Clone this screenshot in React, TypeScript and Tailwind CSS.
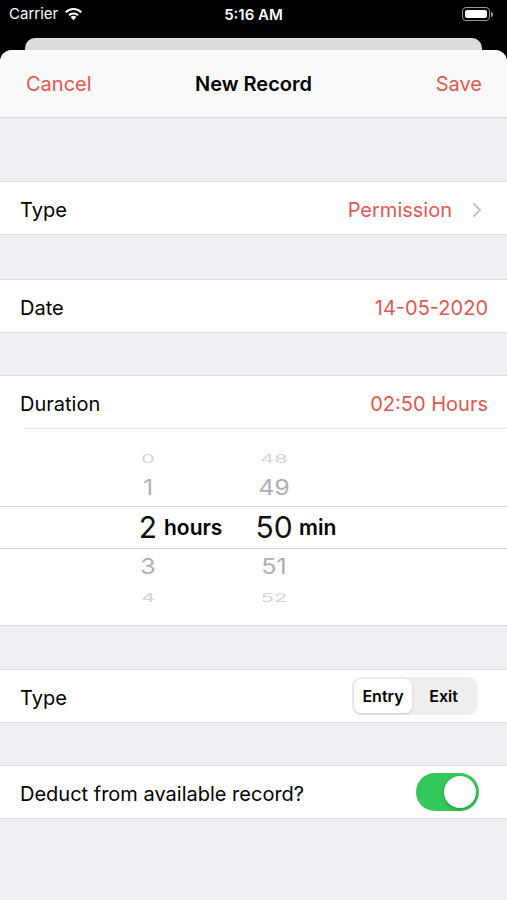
import React from "react";

const RED = "text-[#e2574f]";

function Row({ children, className = "" }: { children: React.ReactNode; className?: string }) {
  return (
    <div className={`h-[54px] bg-white border-y border-[#dcdce0] flex items-center pl-[20px] pr-[19px] pt-[3px] ${className}`}>
      {children}
    </div>
  );
}

function PickerRow({
  h,
  hour,
  min,
  cls,
  band = false,
}: {
  h: string;
  hour: string;
  min: string;
  cls: string;
  band?: boolean;
}) {
  return (
    <div className={`${h} flex items-center ${band ? "border-y border-[#d4d4d8]" : ""}`}>
      <div className="w-[128px]" />
      <div className={`w-[40px] text-center ${cls}`}>{hour}</div>
      <div className="w-[85px] -ml-[4px] text-[21px] font-semibold text-black">{band ? "hours" : ""}</div>
      <div className={`w-[50px] text-center ${cls}`}>{min}</div>
      <div className="text-[21px] font-semibold text-black">{band ? "min" : ""}</div>
    </div>
  );
}

export default function App() {
  return (
    <div
      className="w-[507px] h-[900px] bg-black flex flex-col overflow-hidden"
      style={{ fontFamily: "Inter, 'Noto Sans', sans-serif" }}
    >
      {/* status bar */}
      <div className="h-[38px] flex items-center px-[9px] text-white relative">
        <div className="flex items-center gap-[6px] text-[15px] -mt-[10px]">
          <span>Carrier</span>
          <svg width="19" height="14" viewBox="0 0 19 14">
            <path d="M9.5 13.2 L6.6 10.1 A4.2 4.2 0 0 1 12.4 10.1 Z" fill="white" />
            <path d="M4.2 7.6 A7.6 7.6 0 0 1 14.8 7.6 L13.3 9.1 A5.5 5.5 0 0 0 5.7 9.1 Z" fill="white" />
            <path d="M1 4.6 A11.8 11.8 0 0 1 18 4.6 L16.5 6.1 A9.7 9.7 0 0 0 2.5 6.1 Z" fill="white" />
          </svg>
        </div>
        <div className="absolute left-0 right-0 top-[4px] text-center text-[15px] font-semibold">5:16 AM</div>
        <div className="ml-auto flex items-center -mt-[10px] mr-[5px]">
          <div className="w-[28px] h-[14px] rounded-[4px] border border-[#9a9a9a] p-[2px]">
            <div className="w-full h-full bg-white rounded-[2px]" />
          </div>
          <div className="w-[2px] h-[5px] bg-[#9a9a9a] rounded-r-sm ml-[1px]" />
        </div>
      </div>
      {/* card behind */}
      <div className="mx-[25px] h-[12px] bg-[#dcdcdc] rounded-t-[10px]" />
      {/* sheet */}
      <div className="flex-1 bg-[#efeff4] rounded-t-[12px] overflow-hidden">
        <div className="h-[68px] bg-[#f9f9f9] border-b border-[#d6d6da] flex items-center px-[26px] relative">
          <span className={`text-[20px] ${RED}`}>Cancel</span>
          <span className="absolute left-0 right-0 text-center text-[20px] font-semibold text-black pointer-events-none">
            New Record
          </span>
          <span className={`ml-auto text-[20px] ${RED} mr-[-1px]`}>Save</span>
        </div>

        <div className="h-[63px]" />
        <Row>
          <span className="text-[20px] text-black">Type</span>
          <span className={`ml-auto text-[20px] ${RED}`}>Permission</span>
          <svg width="10" height="16" viewBox="0 0 10 16" className="ml-[20px] mr-[6px]">
            <path d="M2 2 L8 8 L2 14" fill="none" stroke="#c4c4c8" strokeWidth="2" strokeLinecap="round" strokeLinejoin="round" />
          </svg>
        </Row>
        <div className="h-[44px]" />
        <Row>
          <span className="text-[20px] text-black">Date</span>
          <span className={`ml-auto text-[20px] ${RED}`}>14-05-2020</span>
        </Row>
        <div className="h-[42px]" />
        <div className="bg-white border-y border-[#dcdce0]">
          <div className="h-[52px] flex items-center pl-[20px] pr-[19px] pt-[3px]">
            <span className="text-[20px] text-black">Duration</span>
            <span className={`ml-auto text-[20px] ${RED}`}>02:50 Hours</span>
          </div>
          <div className="ml-[24px] h-px bg-[#e4e4e8]" />
          <div className="h-[196px] flex flex-col pt-[14px]" style={{ fontFamily: "'Helvetica Neue', Inter, sans-serif" }}>
            <PickerRow h="h-[30px]" hour="0" min="48" cls="text-[22px] text-[#d4d4d4] scale-y-[0.55]" />
            <PickerRow h="h-[30px]" hour="1" min="49" cls="text-[25px] text-[#b0b0b0] scale-y-[0.85]" />
            <div className="h-[3px]" />
            <PickerRow h="h-[43px]" hour="2" min="50" cls="text-[30px] text-[#111]" band />
            <PickerRow h="h-[36px]" hour="3" min="51" cls="text-[25px] text-[#b0b0b0] scale-y-[0.85]" />
            <PickerRow h="h-[24px]" hour="4" min="52" cls="text-[22px] text-[#d4d4d4] scale-y-[0.55]" />
          </div>
        </div>
        <div className="h-[43px]" />
        <Row>
          <span className="text-[20px] text-black">Type</span>
          <div className="ml-auto mr-[11px] -mt-[3px] h-[38px] w-[125px] bg-[#eeeeef] rounded-[9px] p-[2px] flex items-center">
            <div className="h-full w-[58px] bg-white rounded-[7px] shadow-[0_1px_3px_rgba(0,0,0,0.15)] flex items-center justify-center text-[16px] font-semibold text-black">
              Entry
            </div>
            <div className="flex-1 flex items-center justify-center text-[16px] font-semibold text-black">Exit</div>
          </div>
        </Row>
        <div className="h-[42px]" />
        <Row>
          <span className="text-[20px] text-black">Deduct from available record?</span>
          <div className="ml-auto mr-[9px] -mt-[3px] w-[63px] h-[38px] rounded-full bg-[#34c759] p-[3px] flex justify-end">
            <div className="w-[32px] h-[32px] rounded-full bg-white shadow-[0_2px_4px_rgba(0,0,0,0.2)]" />
          </div>
        </Row>
      </div>
    </div>
  );
}
